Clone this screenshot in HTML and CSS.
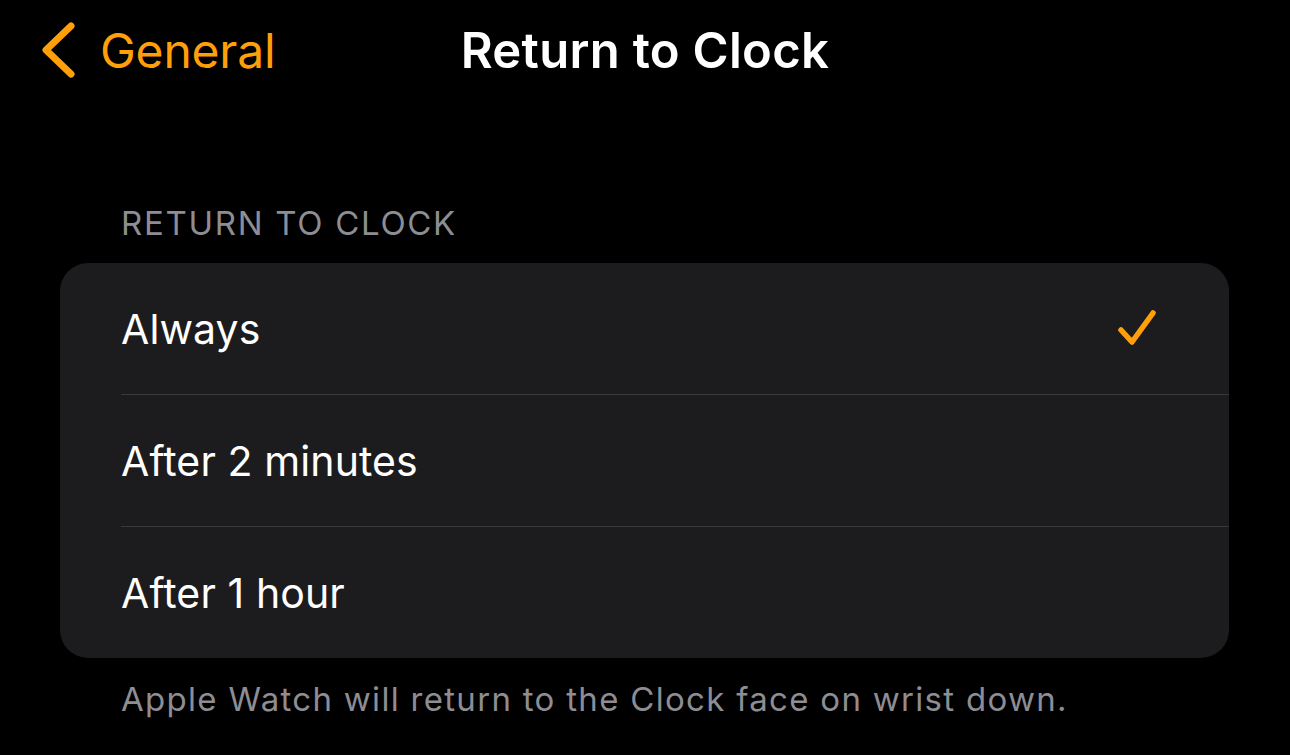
FILE: index.html
```html
<!DOCTYPE html>
<html lang="en">
<head>
  <meta charset="UTF-8">
  <title>Return to Clock</title>
  <link rel="stylesheet" href="styles.css">
</head>
<body>
  <header class="navbar">
    <a class="back">
      <svg class="chevron" width="36" height="58" viewBox="0 0 36 58">
        <path d="M31 5 L6 29 L31 53" fill="none" stroke="#ff9f0a" stroke-width="7" stroke-linecap="round" stroke-linejoin="round"/>
      </svg>
      <span>General</span>
    </a>
    <h1 class="title">Return to Clock</h1>
    <div></div>
  </header>

  <section class="group">
    <div class="group-header">RETURN TO CLOCK</div>
    <ul class="list">
      <li class="row">
        <span>Always</span>
        <svg class="check" width="42" height="40" viewBox="0 0 42 40">
          <path d="M4 21 L15 33 L36 4" fill="none" stroke="#ff9f0a" stroke-width="5.5" stroke-linecap="round" stroke-linejoin="round"/>
        </svg>
      </li>
      <li class="row"><span>After 2 minutes</span></li>
      <li class="row"><span>After 1 hour</span></li>
    </ul>
    <p class="group-footer">Apple Watch will return to the Clock face on wrist down.</p>
  </section>
</body>
</html>
```

FILE: styles.css
```css
* {
  box-sizing: border-box;
  margin: 0;
  padding: 0;
}
body {
  background: #000;
  color: #fff;
  font-family: Inter, "Noto Sans", sans-serif;
  overflow: hidden;
}
.navbar {
  display: grid;
  grid-template-columns: 1fr auto 1fr;
  align-items: center;
  height: 100px;
  padding: 0 40px;
}
.back {
  display: flex;
  align-items: center;
  gap: 24px;
  color: #ff9f0a;
  font-size: 48px;
  letter-spacing: -0.2px;
}
.chevron {
  display: block;
}
.title {
  font-size: 49px;
  font-weight: 600;
  letter-spacing: 0.3px;
}
.group {
  padding: 100px 61px 0 60px;
}
.group-header {
  color: #8d8d93;
  font-size: 33px;
  line-height: 46px;
  padding-left: 61px;
  letter-spacing: 1.7px;
  margin-bottom: 17px;
}
.list {
  list-style: none;
  background: #1c1c1e;
  border-radius: 28px;
  overflow: hidden;
}
.row {
  display: flex;
  align-items: center;
  justify-content: space-between;
  height: 132px;
  margin-left: 61px;
  padding-right: 70px;
  font-size: 41px;
  letter-spacing: 0.1px;
  border-bottom: 1px solid #3a3a3c;
}
.row:last-child {
  border-bottom: none;
  height: 131px;
}
.check {
  display: block;
}
.group-footer {
  color: #8d8d93;
  font-size: 33px;
  line-height: 46px;
  padding-left: 61px;
  margin-top: 18px;
  letter-spacing: 1.3px;
}
```
